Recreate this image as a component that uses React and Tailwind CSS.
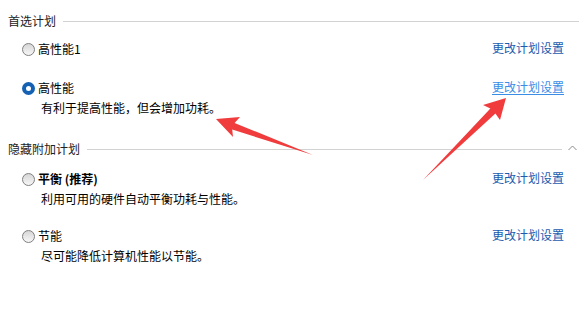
import React from "react";

const Radio = ({ checked }) =>
  checked ? (
    <span className="w-[13px] h-[13px] rounded-full bg-[#1461b3] flex items-center justify-center shrink-0">
      <span className="w-[5px] h-[5px] rounded-full bg-white"></span>
    </span>
  ) : (
    <span className="w-[13px] h-[13px] rounded-full border border-[#7f7f7f] bg-gradient-to-b from-[#d6d6d6] to-[#f7f7f7] shrink-0"></span>
  );

const Plan = ({ name, desc, checked, bold, hover, className }) => (
  <div className={className}>
    <div className="flex items-center h-[20px] pl-[14px] pr-[15px]">
      <Radio checked={checked} />
      <span className={"ml-[3px] text-black " + (bold ? "font-bold" : "")}>{name}</span>
      <a
        className={
          "ml-auto -mt-[3px] cursor-pointer " +
          (hover ? "text-[#3b8ee6] underline underline-offset-2" : "text-[#1a5cae]")
        }
      >
        更改计划设置
      </a>
    </div>
    {desc && <div className="h-[20px] pl-[33px] text-black">{desc}</div>}
  </div>
);

const App = () => {
  return (
    <div
      className="relative w-[579px] h-[311px] bg-white overflow-hidden text-[12px] leading-[20px]"
      style={{ fontFamily: '"Microsoft YaHei", "Noto Sans CJK SC", sans-serif' }}
    >
      <div className="pt-[11px] pl-[8px]">
        <div className="flex items-center h-[20px]">
          <span className="text-[#222]">首选计划</span>
          <div className="flex-1 h-px bg-[#d2d2d2] ml-[7px]"></div>
        </div>

        <Plan className="mt-[8px]" name="高性能1" />
        <Plan className="mt-[19px]" name="高性能" checked hover desc="有利于提高性能，但会增加功耗。" />

        <div className="flex items-center h-[20px] mt-[21px] pr-[2px]">
          <span className="text-[#222]">隐藏附加计划</span>
          <div className="flex-1 h-px bg-[#d2d2d2] ml-[7px]"></div>
          <svg width="9" height="6" viewBox="0 0 9 6" className="ml-[6px] -mt-[3px]">
            <path d="M0.5 5 L4.5 1 L8.5 5" fill="none" stroke="#8a8a8a" strokeWidth="1" />
          </svg>
        </div>

        <Plan className="mt-[10px]" name="平衡 (推荐)" bold desc="利用可用的硬件自动平衡功耗与性能。" />
        <Plan className="mt-[17px]" name="节能" desc="尽可能降低计算机性能以节能。" />
      </div>

      <svg className="absolute left-0 top-0 pointer-events-none" width="579" height="311">
        <polygon
          points="313,155 234.6,122.9 240,117 216,119 233,137 232.2,129.6"
          fill="#f03c3c"
        />
        <polygon
          points="423,180 490.4,108.6 483,105 506,98 500,120 495.4,113.6"
          fill="#f03c3c"
        />
      </svg>
    </div>
  );
};

export default App;
